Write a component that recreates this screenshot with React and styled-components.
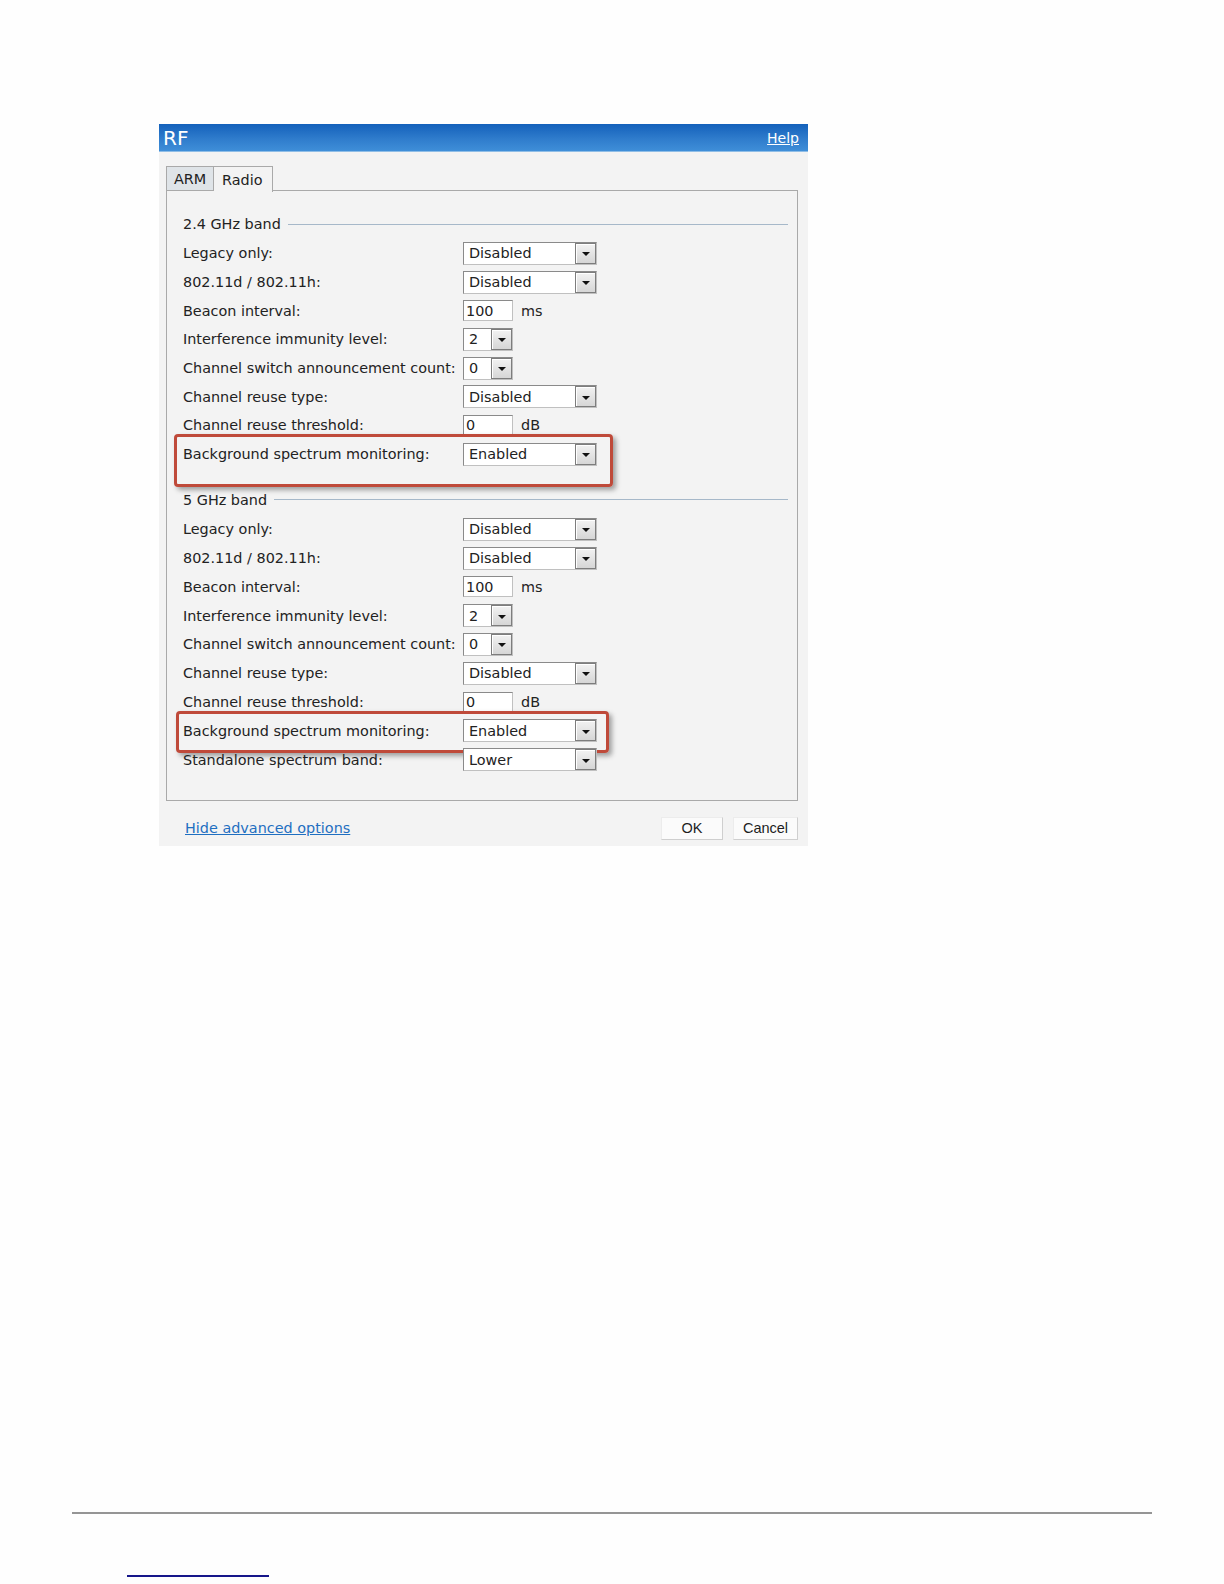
import React from "react";
import styled, { createGlobalStyle } from "styled-components";

const GlobalStyle = createGlobalStyle`
  html, body { margin: 0; padding: 0; background: #fefefe; }
  * { box-sizing: border-box; }
`;

const UI_FONT = `"DejaVu Sans", Verdana, sans-serif`;

const Page = styled.div`
  width: 1224px;
  min-height: 1584px;
  padding-top: 124px;
  display: flex;
  flex-direction: column;
  font-family: ${UI_FONT};
`;

const Dialog = styled.div`
  margin-left: 159px;
  width: 649px;
  background: #f3f3f3;
`;

const Header = styled.div`
  height: 28px;
  display: flex;
  align-items: center;
  justify-content: space-between;
  padding: 0 9px 0 4px;
  background: linear-gradient(#1461bb, #2f7ccc 55%, #3f8ed8);
  border-bottom: 1px solid #8fbde6;
`;

const Title = styled.div`
  color: #fff;
  font-size: 20px;
  line-height: 1;
`;

const HelpLink = styled.a`
  color: #fff;
  font-size: 14px;
  text-decoration: underline;
  cursor: pointer;
`;

const Body = styled.div`
  padding: 14px 10px 0 7px;
`;

const Tabs = styled.div`
  display: flex;
  height: 25px;
  position: relative;
  z-index: 1;
`;

const Tab = styled.div`
  height: ${(p) => (p.$active ? "26px" : "25px")};
  width: ${(p) => p.$w}px;
  padding-left: ${(p) => p.$pl}px;
  display: flex;
  align-items: center;
  font-size: 14.4px;
  color: #222;
  background: ${(p) => (p.$active ? "#f3f3f3" : "#dfe4e8")};
  border: 1px solid #a9a9a9;
  border-bottom: ${(p) => (p.$active ? "none" : "1px solid #a9a9a9")};
  border-left: ${(p) => (p.$first ? "1px solid #a9a9a9" : "none")};
`;

const Panel = styled.div`
  margin-top: -1px;
  border: 1px solid #a9a9a9;
  padding: 23px 9px 26px 16px;
`;

const Section = styled.div`
  margin-bottom: ${(p) => p.$mb || 0}px;
`;

const Legend = styled.div`
  height: 20px;
  margin-bottom: 5px;
  display: flex;
  align-items: center;
  gap: 7px;
  font-size: 14.4px;
  color: #222;
  &::after {
    content: "";
    flex: 1;
    height: 1px;
    background: #a6b8c9;
  }
`;

const Row = styled.div`
  position: relative;
  height: ${(p) => p.$h}px;
  display: grid;
  grid-template-columns: 280px 1fr;
  align-items: center;
`;

const Label = styled.div`
  font-size: 14.4px;
  color: #222;
  white-space: nowrap;
`;

const Control = styled.div`
  display: flex;
  align-items: center;
  gap: 8px;
`;

const SelectBox = styled.div`
  width: ${(p) => p.$w}px;
  height: 23px;
  display: flex;
  align-items: stretch;
  background: #fff;
  border: 1px solid;
  border-color: #8a8a8a #c0c0c0 #c0c0c0 #8a8a8a;
`;

const SelectValue = styled.div`
  flex: 1;
  display: flex;
  align-items: center;
  padding-left: 5px;
  font-size: 14.4px;
  color: #222;
`;

const DropButton = styled.div`
  width: 21px;
  display: flex;
  align-items: center;
  justify-content: center;
  background: linear-gradient(#f2f2f2, #d6d6d6);
  border: 1px solid #7d7d7d;
  box-shadow: inset 1px 1px 0 #ffffff;
  &::after {
    content: "";
    width: 0;
    height: 0;
    border-left: 4px solid transparent;
    border-right: 4px solid transparent;
    border-top: 4px solid #111;
    margin-top: 2px;
  }
`;

const TextBox = styled.div`
  width: 50px;
  height: 21px;
  display: flex;
  align-items: center;
  padding-left: 2px;
  background: #fff;
  border: 1px solid;
  border-color: #8a8a8a #c0c0c0 #c0c0c0 #8a8a8a;
  font-size: 14.4px;
  color: #222;
`;

const Unit = styled.span`
  font-size: 14.4px;
  color: #222;
`;

const Highlight = styled.div`
  position: absolute;
  left: ${(p) => p.$l}px;
  top: ${(p) => p.$t}px;
  width: ${(p) => p.$w}px;
  height: ${(p) => p.$h}px;
  border: 3px solid #bf4a3a;
  border-radius: 4px;
  box-shadow: 3px 3px 5px rgba(0, 0, 0, 0.35);
  pointer-events: none;
`;

const Footer = styled.div`
  height: 45px;
  padding: 15px 0 6px 19px;
  display: flex;
  align-items: center;
  justify-content: space-between;
`;

const FooterLink = styled.a`
  color: #1f6fc1;
  font-size: 14.4px;
  text-decoration: underline;
  cursor: pointer;
`;

const Buttons = styled.div`
  display: flex;
  gap: 10px;
`;

const Button = styled.div`
  width: ${(p) => p.$w}px;
  height: 23px;
  display: flex;
  align-items: center;
  justify-content: center;
  font-family: "Liberation Sans", Arial, sans-serif;
  font-size: 14.5px;
  color: #1e1e1e;
  background: #fbfbfb;
  border: 1px solid;
  border-color: #ececec #cfcfcf #cfcfcf #ececec;
`;

const Rule = styled.div`
  margin-top: 666px;
  margin-left: 72px;
  width: 1080px;
  height: 2px;
  background: #959595;
`;

const BlueRule = styled.div`
  margin-top: 61px;
  margin-left: 127px;
  width: 142px;
  height: 2px;
  background: #16168a;
`;

function Select({ value, w = 134 }) {
  return (
    <SelectBox $w={w}>
      <SelectValue>{value}</SelectValue>
      <DropButton />
    </SelectBox>
  );
}

function Field({ row }) {
  if (row.kind === "select") return <Select value={row.value} w={row.w} />;
  return (
    <Control>
      <TextBox>{row.value}</TextBox>
      <Unit>{row.unit}</Unit>
    </Control>
  );
}

const band24 = [
  { label: "Legacy only:", kind: "select", value: "Disabled" },
  { label: "802.11d / 802.11h:", kind: "select", value: "Disabled" },
  { label: "Beacon interval:", kind: "text", value: "100", unit: "ms" },
  { label: "Interference immunity level:", kind: "select", value: "2", w: 50 },
  { label: "Channel switch announcement count:", kind: "select", value: "0", w: 50 },
  { label: "Channel reuse type:", kind: "select", value: "Disabled" },
  { label: "Channel reuse threshold:", kind: "text", value: "0", unit: "dB" },
  {
    label: "Background spectrum monitoring:",
    kind: "select",
    value: "Enabled",
    hl: { l: -9, t: -6, w: 439, h: 53 },
  },
];

const band5 = [
  { label: "Legacy only:", kind: "select", value: "Disabled" },
  { label: "802.11d / 802.11h:", kind: "select", value: "Disabled" },
  { label: "Beacon interval:", kind: "text", value: "100", unit: "ms" },
  { label: "Interference immunity level:", kind: "select", value: "2", w: 50 },
  { label: "Channel switch announcement count:", kind: "select", value: "0", w: 50 },
  { label: "Channel reuse type:", kind: "select", value: "Disabled" },
  { label: "Channel reuse threshold:", kind: "text", value: "0", unit: "dB" },
  {
    label: "Background spectrum monitoring:",
    kind: "select",
    value: "Enabled",
    hl: { l: -7, t: -5, w: 433, h: 42 },
  },
  { label: "Standalone spectrum band:", kind: "select", value: "Lower" },
];

function Band({ title, rows, mb, rowH }) {
  return (
    <Section $mb={mb}>
      <Legend>{title}</Legend>
      {rows.map((r, i) => (
        <Row key={i} $h={rowH}>
          <Label>{r.label}</Label>
          <Field row={r} />
          {r.hl && <Highlight $l={r.hl.l} $t={r.hl.t} $w={r.hl.w} $h={r.hl.h} />}
        </Row>
      ))}
    </Section>
  );
}

export default function App() {
  return (
    <Page>
      <GlobalStyle />
      <Dialog>
        <Header>
          <Title>RF</Title>
          <HelpLink>Help</HelpLink>
        </Header>
        <Body>
          <Tabs>
            <Tab $w={48} $pl={7} $first>ARM</Tab>
            <Tab $w={59} $pl={8} $active>Radio</Tab>
          </Tabs>
          <Panel>
            <Band title="2.4 GHz band" rows={band24} mb={21.4} rowH={28.7} />
            <Band title="5 GHz band" rows={band5} rowH={28.8} />
          </Panel>
          <Footer>
            <FooterLink>Hide advanced options</FooterLink>
            <Buttons>
              <Button $w={62}>OK</Button>
              <Button $w={65}>Cancel</Button>
            </Buttons>
          </Footer>
        </Body>
      </Dialog>
      <Rule />
      <BlueRule />
    </Page>
  );
}
